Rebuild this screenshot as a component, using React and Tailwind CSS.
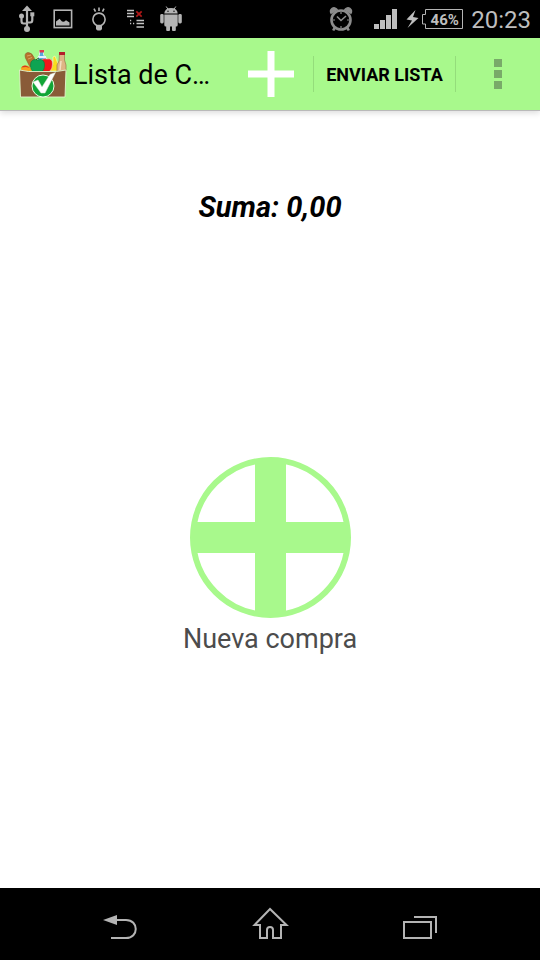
function UsbIcon() {
  return (
    <svg viewBox="0 0 36 38" className="h-[38px] w-9" fill="#b4b4b4" stroke="#b4b4b4">
      <path d="M18 5.500L23 11H13z" stroke="none" />
      <path d="M18 10v17M12.500 17v4q0 2.500 2 2.500H18M23.300 15v5q0 2.500-2 2.500H18" fill="none" strokeWidth="2.2" />
      <circle cx="18" cy="29" r="3" stroke="none" />
      <circle cx="12.500" cy="16" r="2.500" stroke="none" />
      <path d="M21.300 12.300h4v4h-4z" stroke="none" />
    </svg>
  );
}

function PictureIcon() {
  return (
    <svg viewBox="0 0 36 38" className="h-[38px] w-9" fill="none">
      <rect x="9.200" y="10.200" width="17.400" height="17.400" stroke="#b4b4b4" strokeWidth="1.6" />
      <path d="M11 25.500v-4l2-1.500 1.500-1.200 2.500 2.800 2 .2 2-1.500 3.500 2.200v3z" fill="#b4b4b4" />
    </svg>
  );
}

function BulbIcon() {
  return (
    <svg viewBox="0 0 36 38" className="h-[38px] w-9" fill="none" stroke="#b4b4b4" strokeWidth="1.6">
      <path d="M15.800 25.500c-1.600-1-3.900-2.800-3.900-6.300a6.100 6.100 0 0 1 12.200 0c0 3.500-2.300 5.300-3.900 6.300z" />
      <path d="M15 25h6v3.200q0 2.300-3 2.300t-3-2.300z" fill="#b4b4b4" stroke="none" />
      <path d="M18 7.500v3.600M13 8.600l1.500 3M23 8.600l-1.500 3" />
    </svg>
  );
}

function TaskIcon() {
  return (
    <svg viewBox="0 0 36 38" className="h-[38px] w-9" fill="none" stroke="#c4c4c4" strokeWidth="1.3">
      <path d="M19 10.500M10 10.500h7M10 13.500h7M10 16.500h7M19.500 20.500h7.500M19.500 23.500h7.500M19.500 27h7.500" />
      <path d="M19.300 11.300l5.400 5.400M24.700 11.300l-5.400 5.400" stroke="#b01818" strokeWidth="1.7" />
      <path d="M13 20.500h1.200M13 23.500h1.200M16 23.500h1.200" />
    </svg>
  );
}

function RobotIcon() {
  return (
    <svg viewBox="0 0 36 38" className="h-[38px] w-9" fill="#b4b4b4">
      <path d="M13.200 6.500l2 3M22.800 6.500l-2 3" stroke="#b4b4b4" strokeWidth="1" />
      <path d="M11.300 13.600q.3-5.600 6.700-5.600t6.700 5.600z" />
      <path d="M11.300 14.400h13.400V25q0 1.500-1.500 1.500H12.800q-1.500 0-1.500-1.500z" />
      <rect x="7.200" y="14" width="3.500" height="9.500" rx="1.400" />
      <rect x="25.300" y="14" width="3.500" height="9.500" rx="1.400" />
      <rect x="13.200" y="24" width="3.800" height="7" rx="1" />
      <rect x="19" y="24" width="3.800" height="7" rx="1" />
      <circle cx="15" cy="11.300" r=".7" fill="#000" />
      <circle cx="21" cy="11.300" r=".7" fill="#000" />
    </svg>
  );
}

function AlarmIcon() {
  return (
    <svg viewBox="0 0 24 26" className="h-[26px] w-6" fill="none" stroke="#8c8c8c">
      <circle cx="12" cy="14" r="9.500" strokeWidth="2.6" />
      <path d="M2 7.200A3.500 3.500 0 0 1 8 3.500zM22 7.200a3.500 3.500 0 0 0-6-3.700z" fill="#8c8c8c" strokeWidth="1.500" />
      <path d="M5.800 21.500L4.200 24.500M18.200 21.500l1.600 3" strokeWidth="2.6" />
      <path d="M8 10.500l4 4 5-4.500" strokeWidth="1.600" />
      <path d="M12 6v2M12 20v2M4 14h2M18 14h2" strokeWidth="1.200" />
    </svg>
  );
}

function SignalIcon() {
  return (
    <svg viewBox="0 0 24 20" className="h-5 w-6" fill="#bebebe">
      <path d="M0 15h5v5H0zM6 11h5v9H6zM12 6h5v14h-5zM18 0h5v20h-5z" />
    </svg>
  );
}

function Battery() {
  return (
    <div className="grid h-5 w-[41px]">
      <svg viewBox="0 0 41 20" className="col-start-1 row-start-1 h-5 w-[41px]" fill="none" stroke="#b4b4b4" strokeWidth="1">
        <path d="M3.500 .5h37v19h-37v-4.500h-3V5.500h3z" />
      </svg>
      <span className="col-start-1 row-start-1 pt-px pl-1 text-center text-[15px]/5 font-bold text-[#bebebe]">46%</span>
    </div>
  );
}

function StatusBar() {
  return (
    <header className="flex h-[38px] items-center bg-black px-[9px]">
      <div className="flex flex-1">
        <UsbIcon />
        <PictureIcon />
        <BulbIcon />
        <TaskIcon />
        <RobotIcon />
      </div>
      <AlarmIcon />
      <div className="ml-[21px] flex items-center">
        <SignalIcon />
        <svg viewBox="0 0 13 20" className="ml-2 h-5 w-[13px]" fill="#bebebe">
          <path d="M9.500 1L.5 10.500l5.500 1L1.500 19 12.500 9 7 8z" />
        </svg>
        <div className="ml-[3px]">
          <Battery />
        </div>
      </div>
      <time className="ml-2 pt-px text-2xl/8 text-[#bebebe]">20:23</time>
    </header>
  );
}

function GroceryBag() {
  return (
    <svg viewBox="0 0 48 48" className="h-12 w-12 shrink-0">
      <path d="M11 17L6.500 8Q5 3 9 2.500q4 0 6 5l2 6z" fill="#b8722c" stroke="#8a5a2a" strokeWidth=".6" />
      <path d="M8 6l4-1M9 9l4-1.500" stroke="#dba060" strokeWidth="1" />
      <path d="M20.500 1h4v4l3 3v6h-9V8l2-3z" fill="#58a8dc" stroke="#eef6f4" strokeWidth=".8" />
      <path d="M20.500 0h4.500v2.500h-4.500z" fill="#e23b4b" />
      <path d="M19 6h8v2h-8z" fill="#e6f2ff" />
      <path d="M31 21q4-6 3-14l2-1q4 7 3 15z" fill="#f7dd1e" stroke="#fff8ce" strokeWidth=".6" />
      <path d="M40.500 3h5v7l1.500 5v6.500h-9V15l2-4z" fill="#dfb585" stroke="#8f6a3e" strokeWidth=".6" />
      <path d="M42 11l-1 9" stroke="#f4dfc2" strokeWidth="1.5" />
      <path d="M40 2h6v3h-6z" fill="#b3202a" />
      <path d="M2 21q-1-5 4-5.500 6 0 7 5.500z" fill="#f7a51e" />
      <path d="M2 17.500q3-3 6-1.500l3 2-4-1z" fill="#d83a21" />
      <path d="M22 21.500V10q3-2 6-1 5.500-1 5.500 5 0 5-3 7.500z" fill="#f0151a" stroke="#ffd9c9" strokeWidth=".5" />
      <path d="M11.500 15q0-5.500 5-5.500l2.500.500 2-.500q4.500 0 4.500 5.500t-3 6.500h-8q-3-1-3-6.500z" fill="#0da452" stroke="#087a3a" strokeWidth=".6" />
      <path d="M17 10q1-1.500 3-2" fill="none" stroke="#33691e" />
      <path d="M.500 20l9 1.500h28l9.500-1.500-1 27H1.500z" fill="#895b38" stroke="#e2f5cd" strokeWidth=".9" />
      <circle cx="24" cy="36" r="11" fill="#12a537" stroke="#eaffe4" />
      <path d="M14 32l5-2 4 7 8-12.500 5.500-2L26 43h-4z" fill="#fff" stroke="#d9e5d5" strokeWidth=".5" />
    </svg>
  );
}

function ActionBar() {
  return (
    <div className="flex h-[73px] items-stretch border-b border-[#b9b9b9] bg-[#a8f98c] pl-[19px] text-black shadow-[0_2px_6px_rgba(0,0,0,0.14)]">
      <div className="flex min-w-0 flex-1 items-center gap-1.5">
        <GroceryBag />
        <h1 className="pt-0.5 text-[27px]/9 whitespace-nowrap">Lista de C…</h1>
      </div>
      <button type="button" aria-label="Añadir" className="flex w-[84px] items-center justify-center">
        <svg viewBox="0 0 46 46" className="size-[46px]" fill="#fff">
          <path d="M19.500 0h7v19.500H46v7H26.500V46h-7V26.500H0v-7h19.500z" />
        </svg>
      </button>
      <button type="button" className="my-auto h-9 w-[143px] border-x border-[#94dd7b] pt-0.5 text-lg/8 font-bold whitespace-nowrap">
        ENVIAR LISTA
      </button>
      <button type="button" aria-label="Más opciones" className="flex w-[84px] flex-col items-center justify-center gap-[3px]">
        <span className="size-2 bg-[#79aa69]" />
        <span className="size-2 bg-[#79aa69]" />
        <span className="size-2 bg-[#79aa69]" />
      </button>
    </div>
  );
}

function NavBar() {
  return (
    <nav className="flex h-[72px] justify-center bg-black">
      <button type="button" aria-label="Atrás" className="w-[150px]">
        <svg viewBox="0 0 150 72" className="h-[72px] w-[150px]" fill="none" stroke="#b4b4b4" strokeWidth="2">
          <path d="M70 32h11c13 0 13 18 0 18H66" />
          <path d="M58 32l14-5v10z" fill="#b4b4b4" stroke="none" />
        </svg>
      </button>
      <button type="button" aria-label="Inicio" className="w-[150px]">
        <svg viewBox="0 0 150 72" className="h-[72px] w-[150px]" fill="none" stroke="#b4b4b4" strokeWidth="2">
          <path d="M75 21L59.500 37H65v13h7v-8q0-3 3-3t3 3v8h8V37h5.500z" />
        </svg>
      </button>
      <button type="button" aria-label="Recientes" className="w-[150px]">
        <svg viewBox="0 0 150 72" className="h-[72px] w-[150px]" fill="none" stroke="#b4b4b4" strokeWidth="2">
          <path d="M59 34h27v16H59zM69 29h22v16" />
        </svg>
      </button>
    </nav>
  );
}

export default function App() {
  return (
    <div className="flex min-h-screen flex-col bg-white font-[Roboto,sans-serif]">
      <StatusBar />
      <ActionBar />
      <main className="flex flex-1 flex-col items-center pt-[76px]">
        <p className="text-[29px]/10 font-bold text-black italic">Suma: 0,00</p>
        <div className="flex flex-1 items-center">
          <button type="button" className="flex flex-col items-center text-[27px]/10 text-[#4c4c4c]">
            <svg viewBox="0 0 162 162" className="size-[162px]">
              <circle cx="81.500" cy="80.500" r="77.500" fill="#fff" stroke="#a8f98c" strokeWidth="6" />
              <path d="M66 2h31v157H66zM3 65h157v31H3z" fill="#a8f98c" />
            </svg>
            Nueva compra
          </button>
        </div>
      </main>
      <NavBar />
    </div>
  );
}
